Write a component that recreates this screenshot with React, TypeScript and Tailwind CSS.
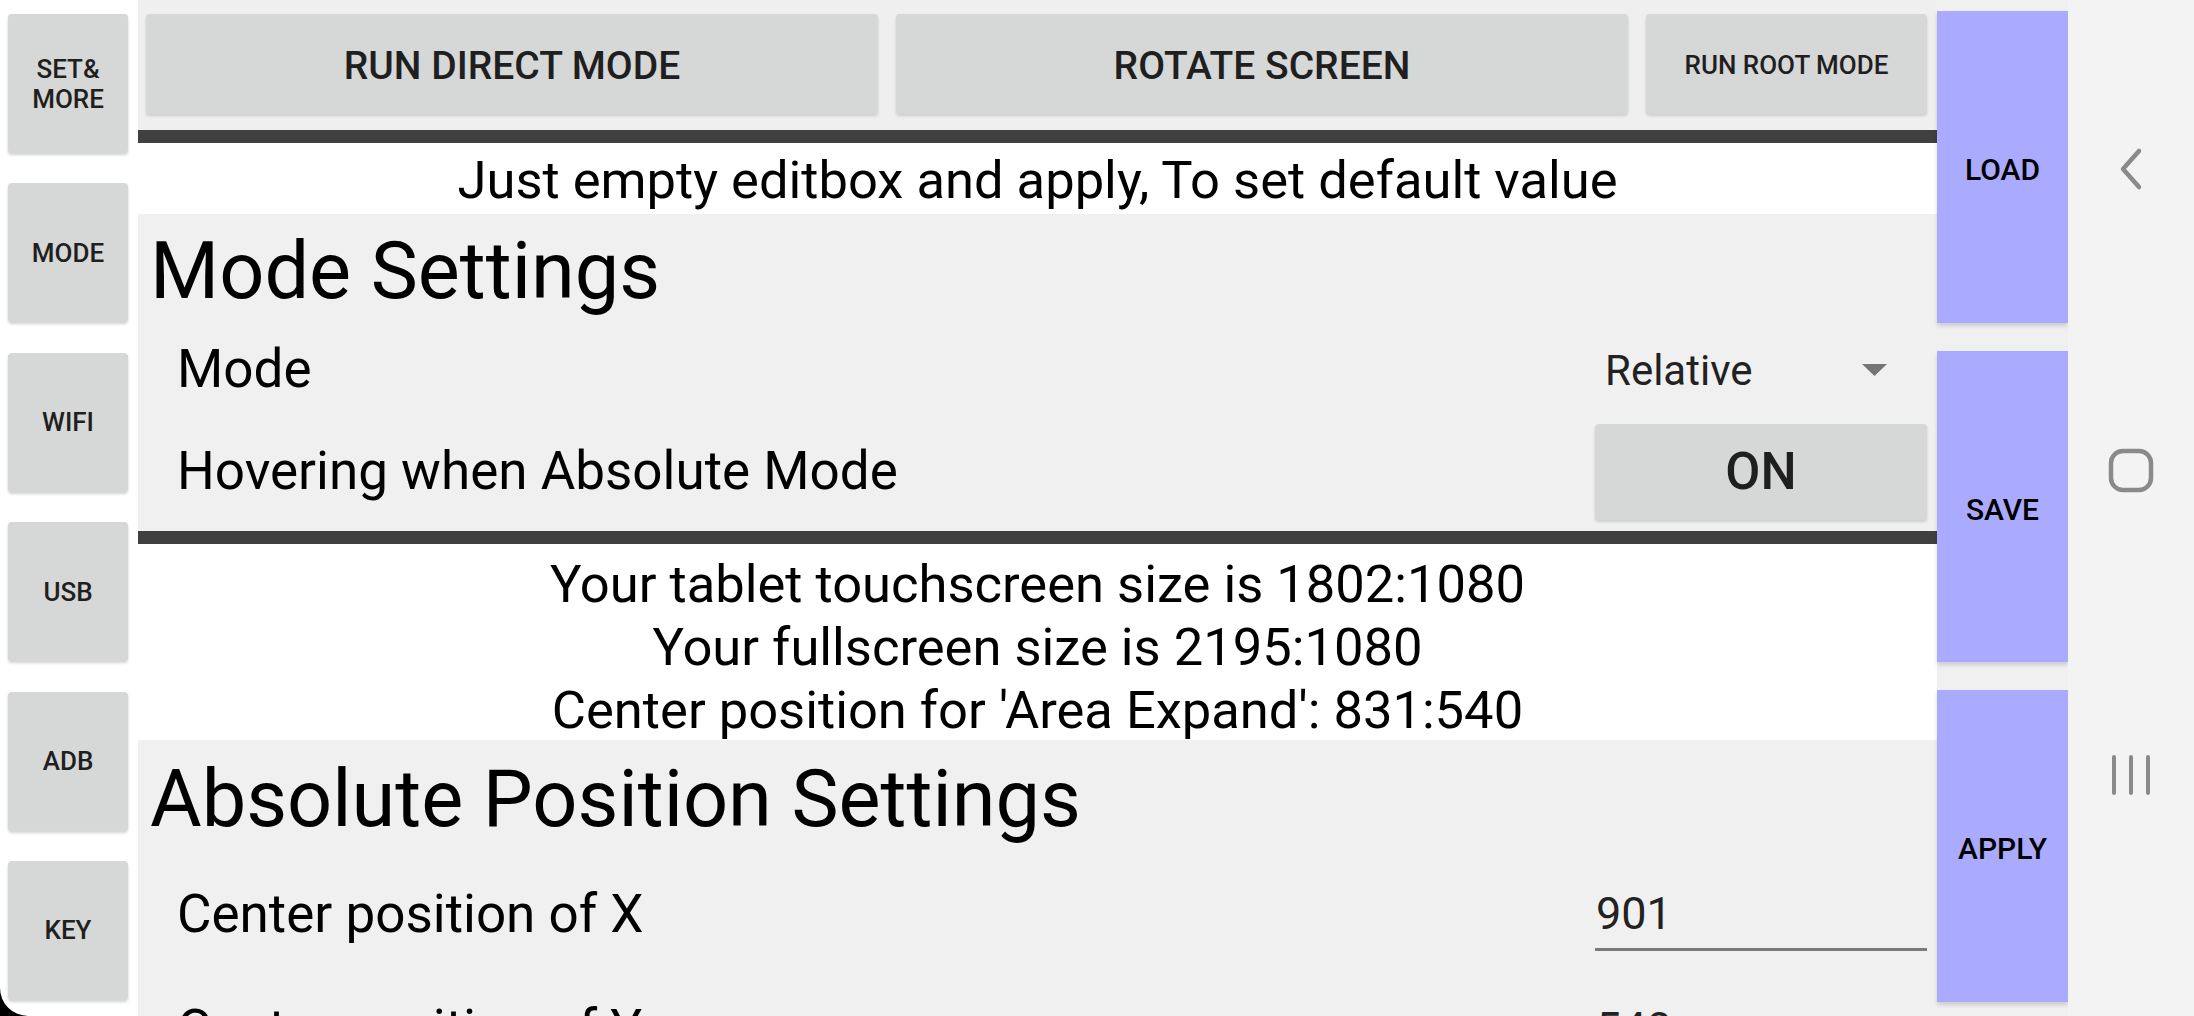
import React from "react";

const sideButtons = [["SET&", "MORE"], ["MODE"], ["WIFI"], ["USB"], ["ADB"], ["KEY"]];

function SideButton({ lines }: { lines: string[] }) {
  return (
    <div className="w-[120px] h-[139px] shrink-0 rounded-[4px] bg-[#d6d7d7] shadow-[0_2px_3px_rgba(0,0,0,0.18)] flex flex-col items-center justify-center text-[26px] leading-[30px] font-medium text-[#1f1f1f]">
      {lines.map((l) => (
        <span key={l}>{l}</span>
      ))}
    </div>
  );
}

function ActionButton({ label, className }: { label: string; className: string }) {
  return (
    <div className={`shrink-0 bg-[#aaaaff] shadow-[0_3px_4px_rgba(0,0,0,0.15)] flex items-center justify-center pt-[5px] text-[30px] font-medium text-black ${className}`}>
      {label}
    </div>
  );
}

function Divider() {
  return <div className="h-[13px] shrink-0 bg-[#404040]" />;
}

function NumberField({ value }: { value: string }) {
  return (
    <div className="w-[332px] self-start mt-[30px] flex flex-col">
      <div className="h-[54px] leading-[54px] text-[45px] text-[#222] pl-[1px]">{value}</div>
      <div className="mt-[7px] h-[3px] bg-[#7a7a7a]" />
    </div>
  );
}

export default function App() {
  return (
    <div className="relative w-[2194px] h-[1016px] overflow-hidden flex bg-white font-['Roboto','Liberation_Sans',sans-serif]">
      {/* left nav */}
      <div className="w-[138px] shrink-0 bg-white flex flex-col gap-[30.4px] pt-[14px] pl-[8px]">
        {sideButtons.map((b) => (
          <SideButton key={b.join()} lines={b} />
        ))}
      </div>

      {/* main */}
      <div className="w-[1799px] shrink-0 flex flex-col overflow-hidden">
        <div className="h-[130px] shrink-0 bg-[#efefef] flex gap-[18px] pl-[8px] pr-[10px] pt-[14px]">
          <div className="flex-1 h-[100px] pt-[5px] rounded-[4px] bg-[#d6d7d7] shadow-[0_2px_3px_rgba(0,0,0,0.15)] flex items-center justify-center text-[39px] font-medium text-[#1f1f1f]">
            RUN DIRECT MODE
          </div>
          <div className="flex-1 h-[100px] pt-[5px] rounded-[4px] bg-[#d6d7d7] shadow-[0_2px_3px_rgba(0,0,0,0.15)] flex items-center justify-center text-[39px] font-medium text-[#1f1f1f]">
            ROTATE SCREEN
          </div>
          <div className="w-[281px] h-[100px] pt-[2px] rounded-[4px] bg-[#d6d7d7] shadow-[0_2px_3px_rgba(0,0,0,0.15)] flex items-center justify-center text-[26px] font-medium text-[#1f1f1f]">
            RUN ROOT MODE
          </div>
        </div>
        <Divider />
        <div className="h-[71px] shrink-0 bg-white pt-[3px] text-center text-[52.5px] leading-[68px] text-black">
          Just empty editbox and apply, To set default value
        </div>

        {/* mode settings */}
        <div className="h-[317px] shrink-0 bg-[#f0f0f0] pt-[7px] text-black">
          <div className="h-[100px] leading-[100px] text-[79.25px] pl-[12px]">Mode Settings</div>
          <div className="h-[98px] flex items-center pl-[39px] pr-[10px]">
            <span className="flex-1 text-[53px]">Mode</span>
            <div className="w-[332px] flex items-center pl-[10px] pr-[40px]">
              <span className="flex-1 text-[42px] text-[#222]">Relative</span>
              <svg width="25" height="12" viewBox="0 0 25 12">
                <path d="M0 0 H25 L12.5 12 Z" fill="#757575" />
              </svg>
            </div>
          </div>
          <div className="mt-[3px] h-[100px] flex items-center pl-[39px] pr-[10px]">
            <span className="flex-1 text-[53px]">Hovering when Absolute Mode</span>
            <div className="w-[332px] h-[96px] rounded-[4px] bg-[#d6d7d7] shadow-[0_2px_3px_rgba(0,0,0,0.15)] flex items-center justify-center text-[51px] font-medium text-[#1f1f1f]">
              ON
            </div>
          </div>
        </div>
        <Divider />

        {/* info */}
        <div className="h-[196px] shrink-0 bg-white pt-[9px] text-center text-[52.5px] leading-[63px] text-black">
          <div>Your tablet touchscreen size is 1802:1080</div>
          <div>Your fullscreen size is 2195:1080</div>
          <div>Center position for 'Area Expand': 831:540</div>
        </div>

        {/* absolute position settings */}
        <div className="h-[400px] shrink-0 bg-[#f0f0f0] pt-[9px] text-black">
          <div className="h-[100px] leading-[100px] text-[79.25px] pl-[12px]">Absolute Position Settings</div>
          <div className="mt-[8px] h-[115px] flex items-center pl-[39px] pr-[10px]">
            <span className="flex-1 text-[53px]">Center position of X</span>
            <NumberField value="901" />
          </div>
          <div className="h-[115px] flex items-center pl-[39px] pr-[10px]">
            <span className="flex-1 text-[53px]">Center position of Y</span>
            <NumberField value="540" />
          </div>
        </div>
      </div>

      {/* right actions */}
      <div className="w-[131px] shrink-0 bg-[#f0f0f0] flex flex-col gap-[28px] pt-[11px]">
        <ActionButton label="LOAD" className="h-[312px]" />
        <ActionButton label="SAVE" className="h-[311px]" />
        <ActionButton label="APPLY" className="h-[312px]" />
      </div>

      {/* system nav */}
      <div className="flex-1 bg-[#f3f3f3] flex flex-col pt-[18px]">
        <div className="h-[302px] shrink-0 flex items-center justify-center">
          <svg width="30" height="44" viewBox="0 0 30 44">
            <path d="M23 4 L7 22 L23 40" fill="none" stroke="#8a8a8a" strokeWidth="4.5" strokeLinecap="round" strokeLinejoin="round" />
          </svg>
        </div>
        <div className="h-[302px] shrink-0 flex items-center justify-center">
          <svg width="46" height="46" viewBox="0 0 46 46">
            <rect x="3" y="3" width="40" height="39" rx="12" fill="none" stroke="#8a8a8a" strokeWidth="4.5" />
          </svg>
        </div>
        <div className="h-[302px] shrink-0 flex items-center justify-center pt-[3px]">
          <svg width="44" height="44" viewBox="0 0 44 44">
            <path d="M5 4 V40 M22 4 V40 M39 4 V40" fill="none" stroke="#8a8a8a" strokeWidth="4" strokeLinecap="round" />
          </svg>
        </div>
      </div>

      {/* rounded screen corner */}
      <svg className="absolute left-0 bottom-0" width="28" height="28" viewBox="0 0 28 28">
        <path d="M0 0 A28 28 0 0 0 28 28 L0 28 Z" fill="#000" />
      </svg>
    </div>
  );
}
